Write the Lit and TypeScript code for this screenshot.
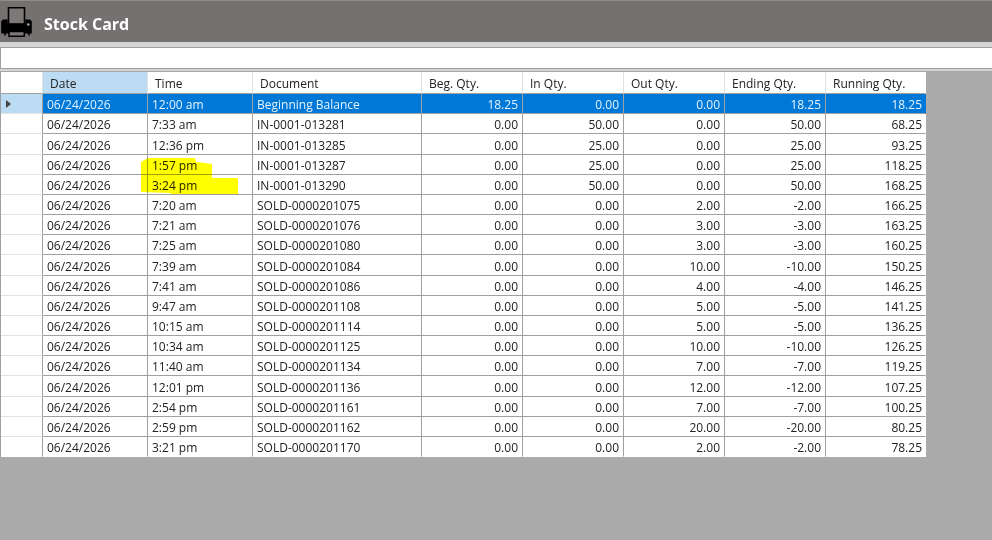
import { LitElement, html, css, svg } from "lit";
import { customElement, state } from "lit/decorators.js";
import { classMap } from "lit/directives/class-map.js";

interface Entry {
  date: string;
  time: string;
  doc: string;
  qty: string[];
}

const entry = (time: string, doc: string, ...qty: string[]): Entry => ({
  date: "06/24/2026",
  time,
  doc,
  qty,
});

const ENTRIES: Entry[] = [
  entry("12:00 am", "Beginning Balance", "18.25", "0.00", "0.00", "18.25", "18.25"),
  entry("7:33 am", "IN-0001-013281", "0.00", "50.00", "0.00", "50.00", "68.25"),
  entry("12:36 pm", "IN-0001-013285", "0.00", "25.00", "0.00", "25.00", "93.25"),
  entry("1:57 pm", "IN-0001-013287", "0.00", "25.00", "0.00", "25.00", "118.25"),
  entry("3:24 pm", "IN-0001-013290", "0.00", "50.00", "0.00", "50.00", "168.25"),
  entry("7:20 am", "SOLD-0000201075", "0.00", "0.00", "2.00", "-2.00", "166.25"),
  entry("7:21 am", "SOLD-0000201076", "0.00", "0.00", "3.00", "-3.00", "163.25"),
  entry("7:25 am", "SOLD-0000201080", "0.00", "0.00", "3.00", "-3.00", "160.25"),
  entry("7:39 am", "SOLD-0000201084", "0.00", "0.00", "10.00", "-10.00", "150.25"),
  entry("7:41 am", "SOLD-0000201086", "0.00", "0.00", "4.00", "-4.00", "146.25"),
  entry("9:47 am", "SOLD-0000201108", "0.00", "0.00", "5.00", "-5.00", "141.25"),
  entry("10:15 am", "SOLD-0000201114", "0.00", "0.00", "5.00", "-5.00", "136.25"),
  entry("10:34 am", "SOLD-0000201125", "0.00", "0.00", "10.00", "-10.00", "126.25"),
  entry("11:40 am", "SOLD-0000201134", "0.00", "0.00", "7.00", "-7.00", "119.25"),
  entry("12:01 pm", "SOLD-0000201136", "0.00", "0.00", "12.00", "-12.00", "107.25"),
  entry("2:54 pm", "SOLD-0000201161", "0.00", "0.00", "7.00", "-7.00", "100.25"),
  entry("2:59 pm", "SOLD-0000201162", "0.00", "0.00", "20.00", "-20.00", "80.25"),
  entry("3:21 pm", "SOLD-0000201170", "0.00", "0.00", "2.00", "-2.00", "78.25"),
];

const QTY_HEADS = ["Beg. Qty.", "In Qty.", "Out Qty.", "Ending Qty.", "Running Qty."];
const MARKED_ROW = 3;

const printer = svg`
  <path d="M8.500 6.800H24.500V23H8.500Z" fill="#7d7978" stroke="#000" stroke-width="1.600"/>
  <path d="M3 18.500H7.700V22.700H25.300V18.500H30L31.800 20.300V32.500H29.800V34.500H28.200V32.500H5.800V34.500H4.200V32.500H1.200V20.300Z" fill="#000"/>
  <path d="M9 30.500H24.300V35.300H9Z" fill="#7d7978" stroke="#000" stroke-width="1.500"/>
  <circle cx="28.300" cy="23.500" r="1.300" fill="#a9a5a4"/>
`;

@customElement("stock-grid")
export class StockGrid extends LitElement {
  @state() private current = 0;

  static styles = css`
    :host {
      display: block;
      border-left: 1px solid #a0a0a0;
    }
    table {
      border-collapse: separate;
      border-spacing: 0;
      table-layout: fixed;
      width: 925px;
      font-size: 12px;
      line-height: 17px;
      color: #222;
      background: #fff;
    }
    .c-mark { width: 42px; }
    .c-when { width: 105px; }
    .c-doc { width: 169px; }
    .c-qty { width: 101px; }
    .c-qty:last-child { width: 100px; }
    th, td {
      box-sizing: border-box;
      height: 20px;
      padding: 2px 4px 0;
      border-right: 1px solid #a0a0a0;
      border-bottom: 1px solid #a0a0a0;
      white-space: nowrap;
      text-align: left;
      font-weight: 400;
    }
    tbody tr:nth-child(6n - 3) > * {
      height: 21px;
    }
    thead th {
      height: 22px;
      padding: 2px 7px 0;
      border-right-color: #e2e2e2;
    }
    thead .sorted {
      background: #bcdcf4;
    }
    .mark {
      padding: 0 5px;
      border-bottom-color: #e2e2e2;
    }
    td.num {
      text-align: right;
    }
    tr > :last-child {
      border-right-color: #fff;
    }
    td.num:last-child {
      padding-right: 3px;
    }
    tbody tr:last-child > * {
      border-bottom-color: #fff;
    }
    .current td {
      background: #0078d7;
      color: #e4f3ff;
    }
    .current > td:last-child {
      border-right-color: #0078d7;
    }
    .current .mark {
      background: #bcdcf4;
    }
    .arrow {
      display: block;
    }
    .marked {
      position: relative;
    }
    .ink {
      position: absolute;
      left: -7px;
      top: 2px;
      pointer-events: none;
      mix-blend-mode: multiply;
    }
  `;

  render() {
    return html`
      <table>
        <colgroup>
          <col class="c-mark" />
          <col class="c-when" />
          <col class="c-when" />
          <col class="c-doc" />
          ${QTY_HEADS.map(() => html`<col class="c-qty" />`)}
        </colgroup>
        <thead>
          <tr>
            <th aria-label="Current row"></th>
            <th class="sorted" scope="col">Date</th>
            <th scope="col">Time</th>
            <th scope="col">Document</th>
            ${QTY_HEADS.map((h) => html`<th scope="col">${h}</th>`)}
          </tr>
        </thead>
        <tbody>
          ${ENTRIES.map((e, i) => this.row(e, i))}
        </tbody>
      </table>
    `;
  }

  private row(e: Entry, i: number) {
    const current = i === this.current;
    return html`
      <tr class=${classMap({ current })} @click=${() => (this.current = i)}>
        <th class="mark">
          ${current
            ? html`<svg class="arrow" width="5" height="8" viewBox="0 0 5 8" aria-hidden="true">
                <path d="M0 0L5 4L0 8Z" fill="#444" />
              </svg>`
            : ""}
        </th>
        <td>${e.date}</td>
        <td class=${classMap({ marked: i === MARKED_ROW })}>
          ${e.time}${i === MARKED_ROW
            ? html`<svg class="ink" width="98" height="38" viewBox="0 0 98 38" aria-hidden="true">
                <path d="M0 5L7 1H54L55 5L64 6L71 7V21H97V37H30L29 36L0 35Z" fill="#ff0" />
              </svg>`
            : ""}
        </td>
        <td>${e.doc}</td>
        ${e.qty.map((q) => html`<td class="num">${q}</td>`)}
      </tr>
    `;
  }
}

@customElement("app-root")
export class AppRoot extends LitElement {
  static styles = css`
    :host {
      display: flex;
      flex-direction: column;
      min-height: 100vh;
      background: #ababab;
      font-family: "Open Sans", "Noto Sans", sans-serif;
    }
    header {
      box-sizing: border-box;
      display: flex;
      align-items: center;
      height: 42px;
      gap: 11px;
      border-top: 1px solid #8f8c8b;
      background: #757170;
      color: #fff;
    }
    .print {
      display: block;
      padding: 0;
      border: 0;
      background: none;
    }
    .print svg {
      display: block;
    }
    h1 {
      margin: 0;
      padding-top: 5px;
      font-size: 16px;
      line-height: 22px;
      font-weight: 700;
    }
    .filter {
      display: flex;
      padding-top: 5px;
      background: #d4d4d4;
      border-bottom: 1px solid #a6a6a6;
    }
    input {
      flex: 1;
      box-sizing: border-box;
      height: 22px;
      margin-bottom: 2px;
      padding: 0 4px;
      border: 1px solid #a0a0a0;
      border-right: 0;
      border-radius: 0;
      background: #fff;
      font: inherit;
      font-size: 12px;
      outline: 0;
    }
  `;

  render() {
    return html`
      <header>
        <button class="print" aria-label="Print">
          <svg width="33" height="42" viewBox="0 0 33 42" aria-hidden="true">${printer}</svg>
        </button>
        <h1>Stock Card</h1>
      </header>
      <div class="filter"><input type="text" aria-label="Filter" /></div>
      <stock-grid></stock-grid>
    `;
  }
}
